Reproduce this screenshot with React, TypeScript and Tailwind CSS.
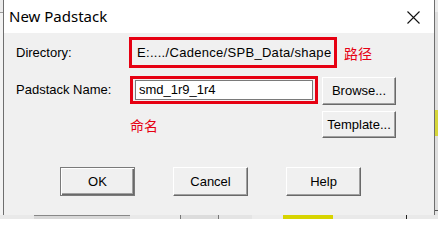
import React from "react";

const btn =
  "flex items-center justify-center bg-[#f0f0f0] text-black text-[13px] border border-t-white border-l-white border-r-[#696969] border-b-[#696969] shadow-[inset_-1px_-1px_0_#a0a0a0]";

export default function App() {
  const sans = { fontFamily: '"Liberation Sans", Arial, sans-serif' };
  const cjk = { fontFamily: '"Noto Sans CJK SC", sans-serif' };
  return (
    <div className="w-[438px] h-[219px] bg-[#e6e6e6] flex flex-col overflow-hidden" style={sans}>
      <div className="flex h-[215px]">
        <div className="w-[3px] flex flex-col">
          <div className="h-[12px] bg-[#ececec]" />
          <div className="h-[1px] bg-[#9a9a9a]" />
          <div className="flex-1 bg-[#f3f3f3]" />
        </div>
        <div className="w-[432px] border-x border-[#6e6e6e] flex flex-col bg-[#f0f0f0]">
          {/* title bar */}
          <div className="h-[33px] bg-white flex items-center justify-between pl-[5px] pr-[14px]">
            <span className="text-[15px] text-black leading-none" style={{ fontFamily: '"Noto Sans", sans-serif' }}>
              New Padstack
            </span>
            <svg width="13" height="13" viewBox="0 0 13 13" className="mt-[1px]">
              <path d="M0.5 0.5 L12.5 12.5 M12.5 0.5 L0.5 12.5" stroke="#111" strokeWidth="1.1" fill="none" />
            </svg>
          </div>
          {/* body */}
          <div className="flex flex-col text-[13px] text-black">
            {/* row 1 */}
            <div className="flex items-center mt-[4px]">
              <div className="w-[125px] pl-[12px]">Directory:</div>
              <div className="w-[208px] h-[31px] border-[3px] border-[#e60012] flex items-center pl-[5px] tracking-[0.3px] whitespace-nowrap">
                E:..../Cadence/SPB_Data/shape
              </div>
              <div className="ml-[7px] text-[14px] text-[#e60012] leading-none" style={cjk}>
                路径
              </div>
            </div>
            {/* row 2 */}
            <div className="flex items-center mt-[7px]">
              <div className="w-[126px] pl-[12px]">Padstack Name:</div>
              <div className="w-[188px] h-[28px] border-[3px] border-[#e60012] flex items-center pl-[2px]">
                <div className="w-[178px] h-[20px] bg-white border border-[#7a7a7a] flex items-center pl-[3px]">
                  smd_1r9_1r4
                </div>
              </div>
              <div className={`${btn} ml-[4px] mt-[2px] w-[74px] h-[28px]`}>Browse...</div>
            </div>
            {/* row 3 */}
            <div className="flex items-center mt-[6px]">
              <div className="w-[126px]" />
              <div className="w-[192px] text-[14px] text-[#e60012] leading-none" style={cjk}>
                命名
              </div>
              <div className={`${btn} w-[74px] h-[27px]`}>Template...</div>
            </div>
            {/* row 4 */}
            <div className="flex items-center mt-[29px] pl-[56px] gap-[38px]">
              <div className="w-[75px] h-[29px] flex items-center justify-center bg-[#f0f0f0] border border-[#7a7a7a] shadow-[inset_1px_1px_0_#fff,inset_-1px_-1px_0_#696969,inset_-2px_-2px_0_#a0a0a0]">
                OK
              </div>
              <div className={`${btn} w-[75px] h-[29px]`}>Cancel</div>
              <div className={`${btn} w-[75px] h-[29px]`}>Help</div>
            </div>
          </div>
        </div>
        <div className="flex-1 flex flex-col">
          <div className="h-[12px] bg-[#ececec]" />
          <div className="h-[98px] bg-[#dedede]" />
          <div className="h-[26px] bg-[#d6d63a]" />
          <div className="h-[74px] bg-[#dedede]" />
          <div className="h-[1px] bg-[#555]" />
          <div className="flex-1 bg-[#e4e4e4]" />
        </div>
      </div>
      <div className="flex h-[4px]">
        <div className="w-[34px] bg-[#e9e9e9]" />
        <div className="w-[96px] bg-[#d8d8d8] border-t border-[#888]" />
        <div className="w-[50px] bg-[#e9e9e9]" />
        <div className="w-[38px] bg-[#dcdcdc] border-l border-[#777]" />
        <div className="w-[34px] bg-[#e4e4e4] border-l border-[#777]" />
        <div className="w-[31px] bg-[#ececec]" />
        <div className="w-[50px] bg-[#d7d400]" />
        <div className="w-[73px] bg-[#e9e9e9]" />
        <div className="w-[1px] bg-[#222]" />
        <div className="flex-1 bg-[#e9e9e9]" />
      </div>
    </div>
  );
}
